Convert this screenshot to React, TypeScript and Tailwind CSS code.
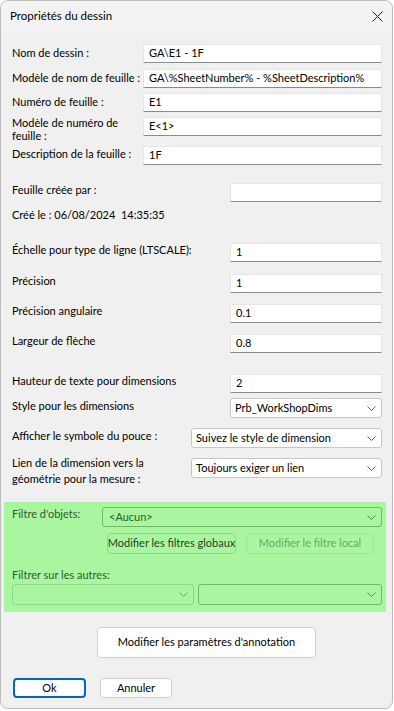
import React from 'react';

const font = { fontFamily: 'Lato, "Liberation Sans", sans-serif' };

function Chevron({ color = '#606060' }: { color?: string }) {
  return (
    <svg width="9" height="5" viewBox="0 0 9 5" className="shrink-0">
      <polyline points="0.5,0.5 4.5,4.5 8.5,0.5" fill="none" stroke={color} strokeWidth="1" />
    </svg>
  );
}

function TextBox({ value, h = 'h-[19px]' }: { value?: string; h?: string }) {
  return (
    <div
      className={`flex ${h} items-center whitespace-nowrap border border-[#e6e6e6] border-b-[#8a8a8a] bg-white pl-[5px] text-[11px] text-black`}
    >
      {value}
    </div>
  );
}

function Select({ value }: { value: string }) {
  return (
    <div className="flex h-[20px] items-center justify-between whitespace-nowrap rounded-[3px] border border-[#c6c6c6] bg-white pl-[4px] pr-[5px] text-[11px] text-black">
      <span>{value}</span>
      <Chevron />
    </div>
  );
}

function Row({
  label,
  children,
  mt,
  labelWidth,
  shift = '',
}: {
  label: React.ReactNode;
  children: React.ReactNode;
  mt: string;
  labelWidth: string;
  shift?: string;
}) {
  return (
    <div className={`flex h-[20px] items-center ${mt}`}>
      <div className={`${labelWidth} ${shift} shrink-0 whitespace-nowrap text-[11px] leading-[16px] text-black`}>
        {label}
      </div>
      <div className="flex-1">{children}</div>
    </div>
  );
}

export default function App() {
  return (
    <div className="h-[711px] w-[394px] bg-white" style={font}>
      <div className="flex h-[709px] w-[393px] flex-col overflow-hidden rounded-[8px] border border-[#bdbdbd] bg-[#f0f0f0]">
        <div className="flex h-[30px] shrink-0 items-center justify-between bg-[#f3f3f3] pl-[9px] pr-[9px]">
          <span className="text-[11.5px] text-black">Propriétés du dessin</span>
          <svg width="11" height="11" viewBox="0 0 11 11">
            <line x1="0.5" y1="0.5" x2="10.5" y2="10.5" stroke="#1a1a1a" strokeWidth="1" />
            <line x1="10.5" y1="0.5" x2="0.5" y2="10.5" stroke="#1a1a1a" strokeWidth="1" />
          </svg>
        </div>

        <div className="flex flex-col pl-[11px] pr-[10px]">
          <Row label="Nom de dessin :" mt="mt-[12px]" labelWidth="w-[131px]">
            <TextBox value="GA\E1 - 1F" />
          </Row>
          <Row label="Modèle de nom de feuille :" mt="mt-[5px]" labelWidth="w-[131px]">
            <TextBox value="GA\%SheetNumber% - %SheetDescription%" />
          </Row>
          <Row label="Numéro de feuille :" mt="mt-[4px]" labelWidth="w-[131px]">
            <TextBox value="E1" />
          </Row>
          <div className="mt-[5px] flex h-[20px] items-start">
            <div className="w-[131px] shrink-0 -mt-[1px] whitespace-nowrap text-[11px] leading-[13px] text-black">
              Modèle de numéro de
              <br />
              feuille :
            </div>
            <div className="flex-1">
              <TextBox value="E<1>" />
            </div>
          </div>
          <Row label="Description de la feuille :" mt="mt-[8px]" labelWidth="w-[131px]" shift="-translate-y-[1px]">
            <TextBox value="1F" />
          </Row>

          <Row label="Feuille créée par :" mt="mt-[17px]" labelWidth="w-[218px]" shift="-translate-y-[2px]">
            <TextBox />
          </Row>
          <div className="mt-[5px] flex h-[16px] items-center whitespace-nowrap text-[11px] text-black">
            Créé le : 06/08/2024&nbsp;&nbsp;14:35:35
          </div>

          <Row label="Échelle pour type de ligne (LTSCALE):" mt="mt-[19px]" labelWidth="w-[218px]" shift="-translate-y-[2px]">
            <TextBox value="1" />
          </Row>
          <Row label="Précision" mt="mt-[11px]" labelWidth="w-[218px]" shift="-translate-y-[2px]">
            <TextBox value="1" />
          </Row>
          <Row label="Précision angulaire" mt="mt-[10px]" labelWidth="w-[218px]" shift="-translate-y-[2px]">
            <TextBox value="0.1" />
          </Row>
          <Row label="Largeur de flèche" mt="mt-[10px]" labelWidth="w-[218px]" shift="-translate-y-[2px]">
            <TextBox value="0.8" />
          </Row>
          <Row label="Hauteur de texte pour dimensions" mt="mt-[20px]" labelWidth="w-[218px]" shift="-translate-y-[2px]">
            <TextBox value="2" />
          </Row>
          <Row label="Style pour les dimensions" mt="mt-[5px]" labelWidth="w-[218px]" shift="-translate-y-[2px]">
            <Select value="Prb_WorkShopDims" />
          </Row>
          <Row label="Afficher le symbole du pouce :" mt="mt-[10px]" labelWidth="w-[179px]" shift="-translate-y-[2px]">
            <Select value="Suivez le style de dimension" />
          </Row>
          <div className="mt-[10px] flex h-[20px] items-start">
            <div className="-mt-[3px] w-[179px] shrink-0 whitespace-nowrap text-[11px] leading-[16px] text-black">
              Lien de la dimension vers la
              <br />
              géométrie pour la mesure :
            </div>
            <div className="flex-1">
              <Select value="Toujours exiger un lien" />
            </div>
          </div>
        </div>

        <div className="ml-[3px] mt-[24px] flex h-[110px] w-[382px] flex-col whitespace-nowrap bg-[#aaf6a0] pb-[7px] pl-[8px] pr-[4px] pt-[5px] text-[11px] text-[#2e5a2e]">
          <div className="flex h-[20px] items-center">
            <span className="w-[90px] shrink-0 -translate-y-[3px]">Filtre d'objets:</span>
            <div className="flex h-[20px] flex-1 items-center justify-between rounded-[3px] border border-[#6fb868] pl-[6px] pr-[5px]">
              <span>&lt;Aucun&gt;</span>
              <Chevron color="#4f8a4a" />
            </div>
          </div>
          <div className="mt-[6px] flex gap-[10px] pl-[95px]">
            <div className="flex h-[21px] w-[129px] items-center justify-center rounded-[4px] border border-[#8fd787] text-[#283f28]">
              Modifier les filtres globaux
            </div>
            <div className="flex h-[21px] w-[128px] items-center justify-center rounded-[4px] border border-[#9fe496] text-[#6aa664]">
              Modifier le filtre local
            </div>
          </div>
          <div className="mt-[13px] leading-[16px]">Filtrer sur les autres:</div>
          <div className="mt-[1px] flex gap-[4px]">
            <div className="flex h-[21px] w-[182px] items-center justify-end rounded-[3px] border border-[#8fd787] pr-[5px]">
              <Chevron color="#6aa664" />
            </div>
            <div className="flex h-[21px] flex-1 items-center justify-end rounded-[3px] border border-[#6fb868] pr-[5px]">
              <Chevron color="#4f8a4a" />
            </div>
          </div>
        </div>

        <div className="ml-[96px] mt-[15px] flex h-[31px] w-[219px] items-center justify-center whitespace-nowrap rounded-[4px] border border-[#cfcfcf] bg-white text-[11px] text-black">
          Modifier les paramètres d'annotation
        </div>

        <div className="mt-[20px] flex gap-[14px] pl-[12px]">
          <div className="flex h-[20px] w-[73px] items-center justify-center rounded-[4px] border-2 border-[#0067c0] bg-white text-[11px] text-black">
            Ok
          </div>
          <div className="flex h-[20px] w-[72px] items-center justify-center rounded-[4px] border border-[#cfcfcf] bg-white text-[11px] text-black">
            Annuler
          </div>
        </div>
      </div>
    </div>
  );
}
